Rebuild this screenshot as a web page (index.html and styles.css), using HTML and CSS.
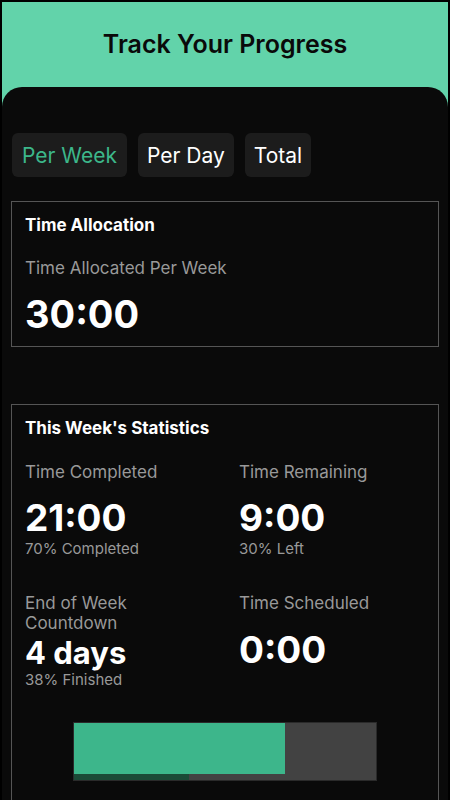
FILE: index.html
```html
<!DOCTYPE html>
<html lang="en">
  <head>
    <meta charset="UTF-8" />
    <meta name="viewport" content="width=device-width, initial-scale=1.0" />
    <title>Track Your Progress</title>
    <link rel="stylesheet" href="styles.css">
  </head>
  <body>
    <div class="screen">
      <header class="top-bar">
        <h1>Track Your Progress</h1>
      </header>

      <main class="panel">
        <div class="tabs">
          <button type="button" class="tab active">Per Week</button>
          <button type="button" class="tab">Per Day</button>
          <button type="button" class="tab">Total</button>
        </div>

        <section class="card">
          <h2>Time Allocation</h2>
          <div class="label">Time Allocated Per Week</div>
          <div class="value big">30:00</div>
        </section>

        <section class="card stats">
          <h2>This Week's Statistics</h2>
          <div class="stat-grid">
            <div class="stat">
              <div class="label">Time Completed</div>
              <div class="value">21:00</div>
              <div class="sub">70% Completed</div>
            </div>
            <div class="stat">
              <div class="label">Time Remaining</div>
              <div class="value">9:00</div>
              <div class="sub">30% Left</div>
            </div>
            <div class="stat">
              <div class="label">End of Week<br />Countdown</div>
              <div class="value days">4 days</div>
              <div class="sub">38% Finished</div>
            </div>
            <div class="stat">
              <div class="label">Time Scheduled</div>
              <div class="value scheduled">0:00</div>
            </div>
          </div>

          <div class="progress">
            <div class="progress-main" style="width: 70%"></div>
            <div class="progress-week">
              <div class="progress-week-fill" style="width: 38%"></div>
            </div>
          </div>
        </section>
      </main>
    </div>
  </body>
</html>
```

FILE: styles.css
```css
body {
  margin: 0;
  background-color: #000;
  font-family: Inter, "Noto Sans", sans-serif;
  color: #fff;
}

.screen {
  height: 798px;
  margin: 2px 2px 0;
  background-color: #62d3aa;
  overflow: hidden;
}

.top-bar {
  height: 85px;
  display: flex;
  justify-content: center;
  align-items: center;
}

.top-bar h1 {
  margin: 0;
  margin-top: -1px;
  font-size: 25px;
  font-weight: 600;
  color: #0a0a0a;
}

.panel {
  min-height: 713px;
  background-color: #0a0a0a;
  border-radius: 20px 20px 0 0;
  padding: 46px 9px 0;
}

.tabs {
  display: flex;
  gap: 11px;
  margin-left: 1px;
}

.tab {
  height: 44px;
  padding: 0 9px;
  border: none;
  border-radius: 6px;
  background-color: #1c1c1c;
  color: #fff;
  font-family: inherit;
  font-size: 21px;
}

.tab.active {
  color: #3cb78a;
  padding: 0 10px;
}

.card {
  border: 1px solid #555;
  padding: 12px 13px 10px;
  margin-top: 24px;
}

.card h2 {
  margin: 0;
  font-size: 17px;
  line-height: 22px;
  font-weight: 700;
}

.label {
  margin-top: 22px;
  font-size: 17px;
  line-height: 20px;
  color: #999;
}

.value {
  margin-top: 14px;
  font-size: 37px;
  line-height: 44px;
  font-weight: 700;
}

.value.big {
  margin-top: 14px;
  font-size: 38px;
}

.value.days {
  margin-top: 2px;
  font-size: 31px;
  line-height: 36px;
}

.value.scheduled {
  margin-top: 15px;
}

.sub {
  margin-top: 0;
  font-size: 15px;
  line-height: 18px;
  color: #999;
}

.stats {
  margin-top: 57px;
  min-height: 400px;
}

.stat-grid {
  display: grid;
  grid-template-columns: 1fr 1fr;
  column-gap: 28px;
  row-gap: 12px;
}

.stat .label {
  margin-top: 23px;
}

.progress {
  width: 302px;
  height: 57px;
  margin: 34px auto 0;
  background-color: #424242;
  box-shadow: 0 0 0 1px #2a2a2a;
  display: flex;
  flex-direction: column;
}

.progress-main {
  height: 51px;
  background-color: #3db68b;
}

.progress-week {
  height: 6px;
}

.progress-week-fill {
  height: 100%;
  background-color: #1b4a37;
}
```
